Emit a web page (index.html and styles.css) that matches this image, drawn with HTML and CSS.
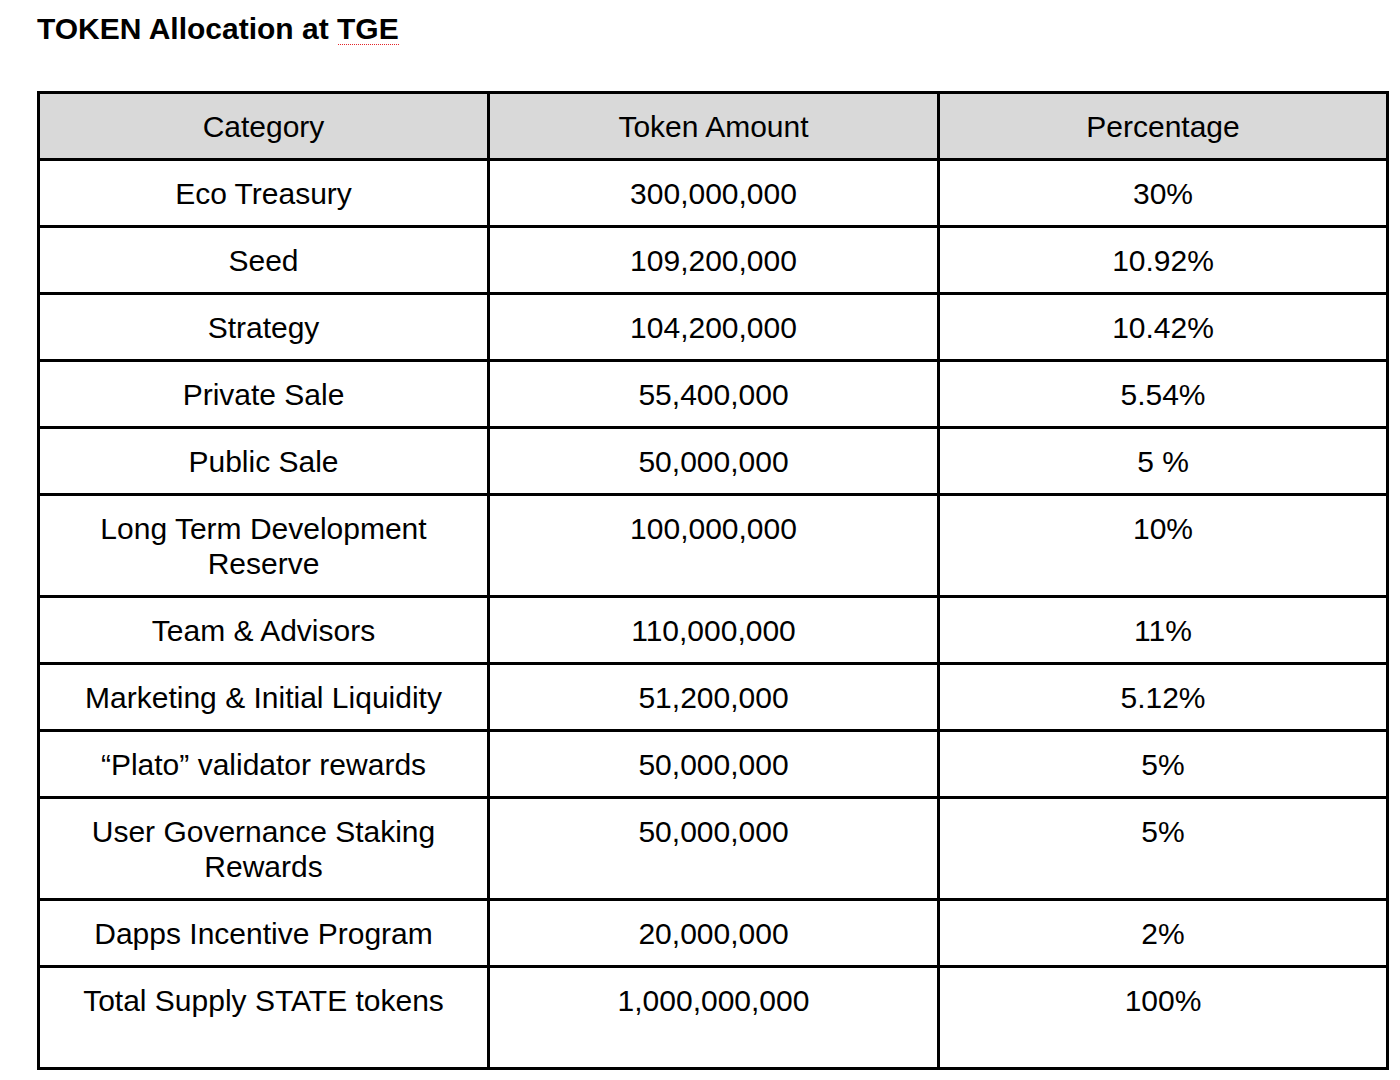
FILE: index.html
```html
<!DOCTYPE html>
<html lang="en">
<head>
<meta charset="utf-8">
<title>TOKEN Allocation at TGE</title>
<link rel="stylesheet" href="styles.css">
</head>
<body>
<main class="page">
  <h1 class="title">TOKEN Allocation at <span class="spell">TGE</span></h1>
  <div class="alloc">
    <div class="cell cell--head">Category</div>
    <div class="cell cell--head">Token Amount</div>
    <div class="cell cell--head">Percentage</div>

    <div class="cell">Eco Treasury</div>
    <div class="cell">300,000,000</div>
    <div class="cell">30%</div>

    <div class="cell">Seed</div>
    <div class="cell">109,200,000</div>
    <div class="cell">10.92%</div>

    <div class="cell">Strategy</div>
    <div class="cell">104,200,000</div>
    <div class="cell">10.42%</div>

    <div class="cell">Private Sale</div>
    <div class="cell">55,400,000</div>
    <div class="cell">5.54%</div>

    <div class="cell">Public Sale</div>
    <div class="cell">50,000,000</div>
    <div class="cell">5 %</div>

    <div class="cell">Long Term Development<br>Reserve</div>
    <div class="cell">100,000,000</div>
    <div class="cell">10%</div>

    <div class="cell">Team &amp; Advisors</div>
    <div class="cell">110,000,000</div>
    <div class="cell">11%</div>

    <div class="cell">Marketing &amp; Initial Liquidity</div>
    <div class="cell">51,200,000</div>
    <div class="cell">5.12%</div>

    <div class="cell">“Plato” validator rewards</div>
    <div class="cell">50,000,000</div>
    <div class="cell">5%</div>

    <div class="cell">User Governance Staking<br>Rewards</div>
    <div class="cell">50,000,000</div>
    <div class="cell">5%</div>

    <div class="cell">Dapps Incentive Program</div>
    <div class="cell">20,000,000</div>
    <div class="cell">2%</div>

    <div class="cell cell--tall">Total Supply STATE tokens</div>
    <div class="cell cell--tall">1,000,000,000</div>
    <div class="cell cell--tall">100%</div>
  </div>
</main>
</body>
</html>
```

FILE: styles.css
```css
html, body {
  margin: 0;
  padding: 0;
  background: #ffffff;
}

body {
  font-family: "Liberation Sans", Arial, sans-serif;
  color: #000000;
}

.page {
  padding: 12px 0 0 37px;
}

.title {
  margin: 0;
  font-size: 30px;
  line-height: 34px;
  font-weight: 700;
  color: #000000;
}

.spell {
  position: relative;
  display: inline-block;
  vertical-align: top;
}

.spell::after {
  content: "";
  position: absolute;
  left: 1px;
  right: 0;
  top: 32px;
  height: 1px;
  background: repeating-linear-gradient(to right, #e3262b 0 1px, transparent 1px 2px);
}

.alloc {
  margin-top: 44.5px;
  width: 1352px;
  box-sizing: border-box;
  display: grid;
  grid-template-columns: 447px 447px 446px;
  gap: 3px;
  padding: 3px;
  background: #000000;
}

.cell {
  background: #ffffff;
  font-size: 30px;
  line-height: 35px;
  text-align: center;
  padding: 15.5px 4px 13.5px;
  min-height: 64px;
  box-sizing: border-box;
}

.cell--head {
  background: #d9d9d9;
}

.cell--tall {
  min-height: 99px;
}
```
